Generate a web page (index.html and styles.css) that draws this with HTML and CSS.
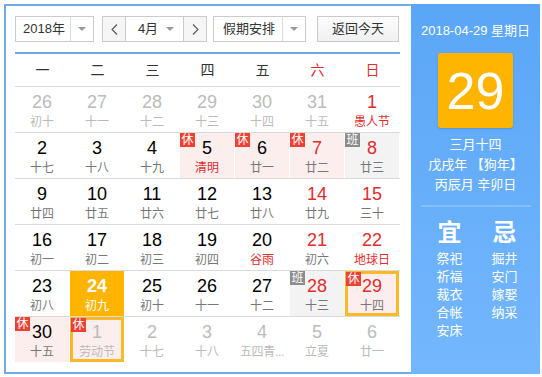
FILE: index.html
```html
<!DOCTYPE html>
<html lang="zh-CN">
  <head>
    <meta charset="UTF-8" />
    <title>万年历</title>
    <link rel="stylesheet" href="styles.css">
  </head>
  <body>
    <div class="calendar">
      <div class="cal-main">
        <!-- Toolbar -->
        <div class="toolbar">
          <div class="select year-select">
            <span class="select-text">2018年</span>
            <span class="select-btn"><i class="caret"></i></span>
          </div>
          <div class="month-group">
            <span class="nav-btn">
              <svg width="7" height="11" viewBox="0 0 7 11"><polyline points="6,0.5 1,5.5 6,10.5" fill="none" stroke="#555" stroke-width="1.1" /></svg>
            </span>
            <div class="month-select">
              <span class="select-text">4月</span>
              <i class="caret"></i>
            </div>
            <span class="nav-btn">
              <svg width="7" height="11" viewBox="0 0 7 11"><polyline points="1,0.5 6,5.5 1,10.5" fill="none" stroke="#555" stroke-width="1.1" /></svg>
            </span>
          </div>
          <div class="select holiday-select">
            <span class="select-text">假期安排</span>
            <span class="select-btn"><i class="caret"></i></span>
          </div>
          <button class="today-btn">返回今天</button>
        </div>

        <!-- Weekday header -->
        <div class="weekdays">
          <span>一</span><span>二</span><span>三</span><span>四</span><span>五</span>
          <span class="weekend">六</span><span class="weekend">日</span>
        </div>

        <!-- Days -->
        <div class="week">
          <div class="day other"><span class="num">26</span><span class="lunar">初十</span></div>
          <div class="day other"><span class="num">27</span><span class="lunar">十一</span></div>
          <div class="day other"><span class="num">28</span><span class="lunar">十二</span></div>
          <div class="day other"><span class="num">29</span><span class="lunar">十三</span></div>
          <div class="day other"><span class="num">30</span><span class="lunar">十四</span></div>
          <div class="day other"><span class="num">31</span><span class="lunar">十五</span></div>
          <div class="day weekend"><span class="num">1</span><span class="lunar festival">愚人节</span></div>
        </div>
        <div class="week">
          <div class="day"><span class="num">2</span><span class="lunar">十七</span></div>
          <div class="day"><span class="num">3</span><span class="lunar">十八</span></div>
          <div class="day"><span class="num">4</span><span class="lunar">十九</span></div>
          <div class="day rest"><span class="badge">休</span><span class="num">5</span><span class="lunar festival">清明</span></div>
          <div class="day rest"><span class="badge">休</span><span class="num">6</span><span class="lunar">廿一</span></div>
          <div class="day rest weekend"><span class="badge">休</span><span class="num">7</span><span class="lunar">廿二</span></div>
          <div class="day work weekend"><span class="badge">班</span><span class="num">8</span><span class="lunar">廿三</span></div>
        </div>
        <div class="week">
          <div class="day"><span class="num">9</span><span class="lunar">廿四</span></div>
          <div class="day"><span class="num">10</span><span class="lunar">廿五</span></div>
          <div class="day"><span class="num">11</span><span class="lunar">廿六</span></div>
          <div class="day"><span class="num">12</span><span class="lunar">廿七</span></div>
          <div class="day"><span class="num">13</span><span class="lunar">廿八</span></div>
          <div class="day weekend"><span class="num">14</span><span class="lunar">廿九</span></div>
          <div class="day weekend"><span class="num">15</span><span class="lunar">三十</span></div>
        </div>
        <div class="week">
          <div class="day"><span class="num">16</span><span class="lunar">初一</span></div>
          <div class="day"><span class="num">17</span><span class="lunar">初二</span></div>
          <div class="day"><span class="num">18</span><span class="lunar">初三</span></div>
          <div class="day"><span class="num">19</span><span class="lunar">初四</span></div>
          <div class="day"><span class="num">20</span><span class="lunar festival">谷雨</span></div>
          <div class="day weekend"><span class="num">21</span><span class="lunar">初六</span></div>
          <div class="day weekend"><span class="num">22</span><span class="lunar festival">地球日</span></div>
        </div>
        <div class="week">
          <div class="day"><span class="num">23</span><span class="lunar">初八</span></div>
          <div class="day today"><span class="num">24</span><span class="lunar">初九</span></div>
          <div class="day"><span class="num">25</span><span class="lunar">初十</span></div>
          <div class="day"><span class="num">26</span><span class="lunar">十一</span></div>
          <div class="day"><span class="num">27</span><span class="lunar">十二</span></div>
          <div class="day work weekend"><span class="badge">班</span><span class="num">28</span><span class="lunar">十三</span></div>
          <div class="day rest weekend selected"><span class="badge">休</span><span class="num">29</span><span class="lunar">十四</span></div>
        </div>
        <div class="week last">
          <div class="day rest"><span class="badge">休</span><span class="num">30</span><span class="lunar">十五</span></div>
          <div class="day rest other selected"><span class="badge">休</span><span class="num">1</span><span class="lunar">劳动节</span></div>
          <div class="day other"><span class="num">2</span><span class="lunar">十七</span></div>
          <div class="day other"><span class="num">3</span><span class="lunar">十八</span></div>
          <div class="day other"><span class="num">4</span><span class="lunar short">五四青...</span></div>
          <div class="day other"><span class="num">5</span><span class="lunar">立夏</span></div>
          <div class="day other"><span class="num">6</span><span class="lunar">廿一</span></div>
        </div>
      </div>

      <!-- Right panel -->
      <div class="panel">
        <div class="panel-date">2018-04-29 星期日</div>
        <div class="big-day">29</div>
        <div class="panel-lunar">
          <div>三月十四</div>
          <div>戊戌年 【狗年】</div>
          <div>丙辰月 辛卯日</div>
        </div>
        <div class="panel-line"></div>
        <div class="yiji">
          <div class="yiji-col">
            <div class="yiji-title">宜</div>
            <div>祭祀</div>
            <div>祈福</div>
            <div>裁衣</div>
            <div>合帐</div>
            <div>安床</div>
          </div>
          <div class="yiji-col">
            <div class="yiji-title">忌</div>
            <div>掘井</div>
            <div>安门</div>
            <div>嫁娶</div>
            <div>纳采</div>
          </div>
        </div>
      </div>
    </div>
  </body>
</html>
```

FILE: styles.css
```css
/* Calendar widget */
body {
  margin: 0;
  background: #fff;
  font-family: "Liberation Sans", "Noto Sans CJK SC", sans-serif;
}

.calendar {
  display: flex;
  width: 536px;
  height: 370px;
  margin: 4px;
}

.cal-main {
  width: 407px;
  box-sizing: border-box;
  border: 2px solid #72ace8;
  border-right: none;
  padding: 10px 11px 10px 9px;
}

/* Toolbar */
.toolbar {
  display: flex;
  height: 26px;
  padding-bottom: 10px;
  border-bottom: 2px solid #6fa8ea;
}

.select {
  display: flex;
  box-sizing: border-box;
  height: 26px;
  border: 1px solid #cbcbcb;
  background: #fff;
  font-size: 13px;
  color: #333;
}

.select-text {
  flex: 1;
  line-height: 24px;
  text-align: center;
}

.select-btn {
  display: flex;
  align-items: center;
  justify-content: center;
  width: 22px;
  border-left: 1px solid #dcdcdc;
}

.caret {
  display: block;
  width: 0;
  height: 0;
  border-left: 4px solid transparent;
  border-right: 4px solid transparent;
  border-top: 4px solid #999;
}

.year-select {
  width: 79px;
}

.year-select .select-text {
  padding-left: 2px;
}

.month-group {
  display: flex;
  box-sizing: border-box;
  height: 26px;
  margin-left: 8px;
  border: 1px solid #cbcbcb;
}

.nav-btn {
  display: flex;
  align-items: center;
  justify-content: center;
  width: 22px;
  background: #f6f6f6;
}

.month-select {
  display: flex;
  align-items: center;
  width: 59px;
  box-sizing: border-box;
  border-left: 1px solid #cbcbcb;
  border-right: 1px solid #cbcbcb;
  background: #fff;
  font-size: 13px;
  color: #333;
  padding-right: 9px;
}

.month-select .select-text {
  padding-left: 4px;
}

.holiday-select {
  width: 93px;
  margin-left: 6px;
}

.holiday-select .select-text {
  padding-left: 2px;
}

.today-btn {
  width: 82px;
  height: 26px;
  margin-left: 11px;
  padding: 0;
  border: 1px solid #cbcbcb;
  background: linear-gradient(#fcfcfc, #f0f0f0);
  font-family: inherit;
  font-size: 13px;
  color: #333;
  line-height: 24px;
}

/* Weekday header */
.weekdays {
  display: grid;
  grid-template-columns: repeat(7, 55px);
  height: 32px;
  line-height: 32px;
  border-bottom: 1px solid #dadada;
  font-size: 14px;
  color: #333;
  text-align: center;
}

.weekdays .weekend {
  color: #e02d2d;
}

/* Day cells */
.week {
  display: grid;
  grid-template-columns: repeat(7, 55px);
  border-bottom: 1px solid #dadada;
}

.week.last {
  border-bottom: none;
}

.day {
  position: relative;
  height: 45px;
  margin-right: 1px;
  box-sizing: border-box;
  padding-top: 5px;
  text-align: center;
}

.num {
  display: block;
  font-size: 18px;
  line-height: 21px;
  color: #000;
}

.lunar {
  display: block;
  font-size: 12px;
  line-height: 18px;
  color: #777;
  white-space: nowrap;
}

.lunar.short {
  letter-spacing: -0.3px;
}

.day.weekend .num {
  color: #e02d2d;
}

.lunar.festival {
  color: #e02d2d;
}

.day.rest {
  background: #fdeeee;
}

.day.work {
  background: #f3f3f3;
}

.day.other .num,
.day.other .lunar {
  color: #bbb;
}

.day.today {
  background: #ffb500;
}

.day.today .num {
  color: #fff;
  font-weight: bold;
}

.day.today .lunar {
  color: #fff;
}

.day.selected {
  box-shadow: inset 0 0 0 3px #fbb928;
}

.badge {
  position: absolute;
  left: 0;
  top: 0;
  width: 15px;
  height: 14px;
  line-height: 14px;
  font-size: 12px;
  color: #fff;
  background: #ee4136;
}

.day.work .badge {
  background: #8c8c8c;
}

.day.selected .badge {
  left: 1px;
  top: 1px;
}

/* Right panel */
.panel {
  width: 129px;
  height: 370px;
  box-sizing: border-box;
  padding-top: 17px;
  background: linear-gradient(#5aa6f6, #74b7fe);
  color: #fff;
  text-align: center;
}

.panel-date {
  font-size: 13px;
  line-height: 20px;
}

.big-day {
  width: 75px;
  height: 75px;
  box-sizing: border-box;
  margin: 12px auto 0;
  padding-top: 1px;
  border-radius: 3px;
  background: #ffb400;
  box-shadow: 0 1px 2px rgba(0, 0, 0, 0.15);
  font-size: 52px;
  line-height: 74px;
}

.panel-lunar {
  margin-top: 7px;
  font-size: 13px;
  line-height: 20px;
}

.panel-line {
  height: 2px;
  margin: 10px 9px 0 10px;
  background: #88bff9;
}

.yiji {
  display: flex;
  margin: 11px 0 0 11px;
}

.yiji-col {
  width: 55px;
  font-size: 13px;
  line-height: 18px;
}

.yiji-title {
  font-size: 24px;
  font-weight: bold;
  line-height: 30px;
  margin-bottom: 2px;
}
```
